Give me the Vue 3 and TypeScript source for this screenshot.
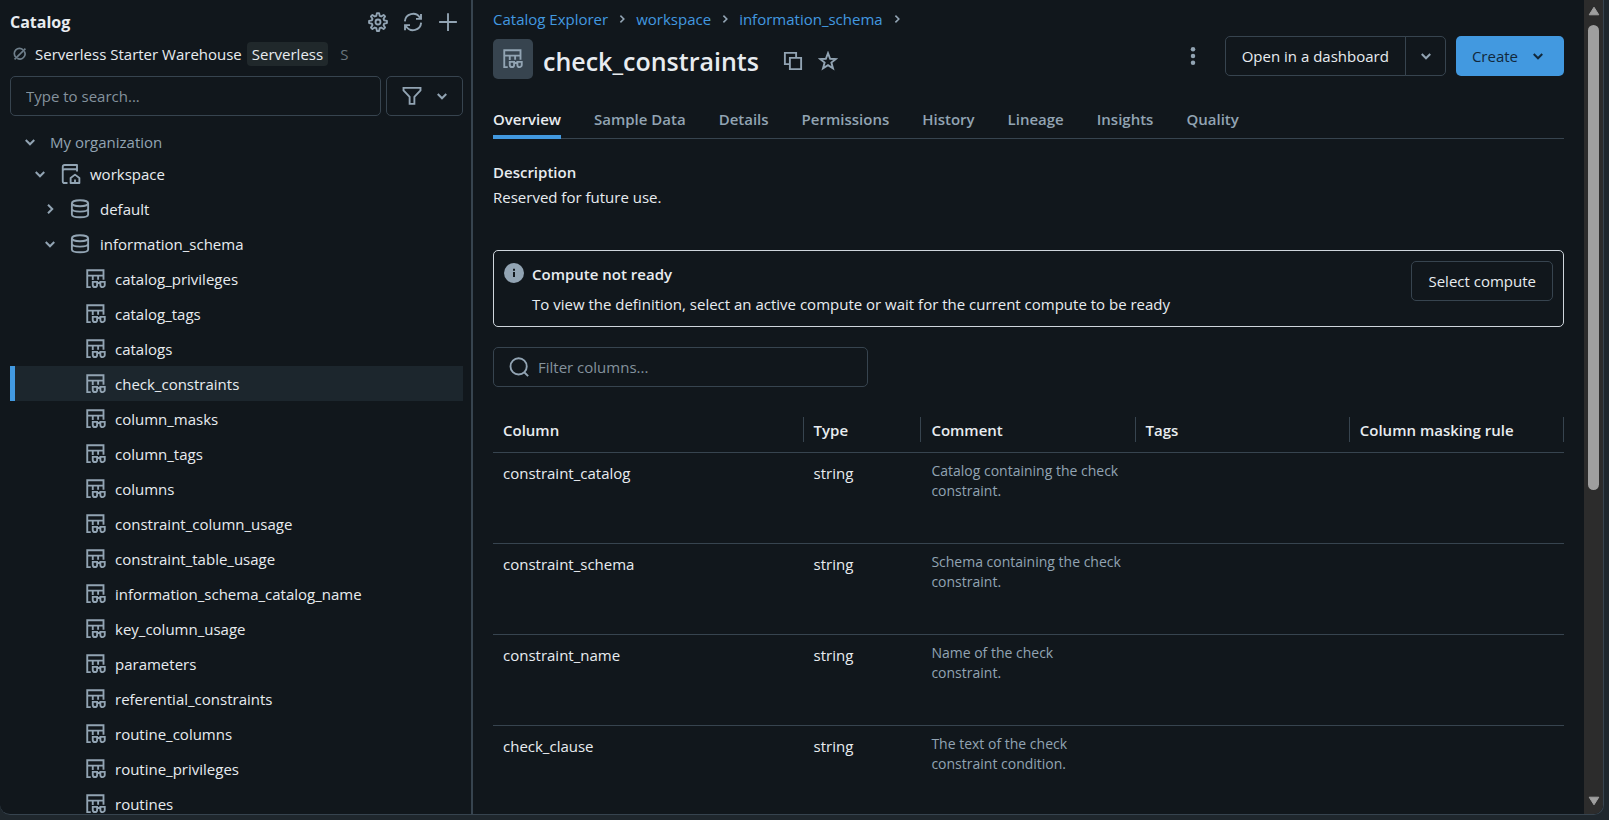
<script setup lang="ts">
import { ref } from 'vue'

interface TreeNode {
  name: string
  level: number
  icon?: string
  state?: 'open' | 'closed'
}

interface ColumnRow {
  name: string
  type: string
  comment: string
}

const views: string[] = [
  'catalog_privileges',
  'catalog_tags',
  'catalogs',
  'check_constraints',
  'column_masks',
  'column_tags',
  'columns',
  'constraint_column_usage',
  'constraint_table_usage',
  'information_schema_catalog_name',
  'key_column_usage',
  'parameters',
  'referential_constraints',
  'routine_columns',
  'routine_privileges',
  'routines',
]

const nodes: TreeNode[] = [
  { name: 'My organization', level: 0, state: 'open' },
  { name: 'workspace', level: 1, icon: 'catalog-home', state: 'open' },
  { name: 'default', level: 2, icon: 'database', state: 'closed' },
  { name: 'information_schema', level: 2, icon: 'database', state: 'open' },
  ...views.map((name): TreeNode => ({ name, level: 3, icon: 'view' })),
]

const crumbs: string[] = ['Catalog Explorer', 'workspace', 'information_schema']
const tabs: string[] = ['Overview', 'Sample Data', 'Details', 'Permissions', 'History', 'Lineage', 'Insights', 'Quality']
const headers: string[] = ['Column', 'Type', 'Comment', 'Tags', 'Column masking rule']

const rows: ColumnRow[] = [
  { name: 'constraint_catalog', type: 'string', comment: 'Catalog containing the check constraint.' },
  { name: 'constraint_schema', type: 'string', comment: 'Schema containing the check constraint.' },
  { name: 'constraint_name', type: 'string', comment: 'Name of the check constraint.' },
  { name: 'check_clause', type: 'string', comment: 'The text of the check constraint condition.' },
]

const selected = ref('check_constraints')
const activeTab = ref('Overview')
const search = ref('')
const columnFilter = ref('')

function gearOutline(teeth: number, outer: number, inner: number): string {
  const step = (Math.PI * 2) / teeth
  const points: string[] = []
  for (let i = 0; i < teeth; i++) {
    const mid = i * step - Math.PI / 2
    const corners: [number, number][] = [[-0.34, inner], [-0.15, outer], [0.15, outer], [0.34, inner]]
    for (const [offset, radius] of corners) {
      const angle = mid + offset * step
      points.push(`${(8 + radius * Math.cos(angle)).toFixed(2)} ${(8 + radius * Math.sin(angle)).toFixed(2)}`)
    }
  }
  return `M${points.join('L')}Z`
}

const gear = gearOutline(8, 7.2, 5.1)
</script>

<template>
  <div class="window">
    <svg class="sprite" aria-hidden="true">
      <symbol id="gear" viewBox="0 0 16 16">
        <g fill="none" stroke="currentColor" stroke-width="1.5" stroke-linejoin="round">
          <path :d="gear" />
          <circle cx="8" cy="8" r="2" />
        </g>
      </symbol>
      <symbol id="refresh" viewBox="0 0 16 16">
        <path fill="none" stroke="currentColor" stroke-width="1.5" d="M1.500 7.500A6.500 6.500 0 0 1 13.400 4.400L14.300 5.400M14.400 1.500V5.500H10.400M14.500 8.500A6.500 6.500 0 0 1 2.600 11.600L1.700 10.600M1.600 14.500V10.500H5.600" />
      </symbol>
      <symbol id="plus" viewBox="0 0 16 16">
        <path fill="none" stroke="currentColor" stroke-width="1.5" d="M8 .9V15.1M.9 8H15.1" />
      </symbol>
      <symbol id="funnel" viewBox="0 0 16 16">
        <path fill="none" stroke="currentColor" stroke-width="1.500" d="M1.200 1.500H14.800V3.500L9.900 8.700V14.300H6.100V8.700L1.200 3.500Z" />
      </symbol>
      <symbol id="chevron-down" viewBox="0 0 16 16">
        <path fill="none" stroke="currentColor" stroke-width="1.6" d="M4.600 6.400L8 9.800L11.400 6.400" />
      </symbol>
      <symbol id="chevron-right" viewBox="0 0 16 16">
        <path fill="none" stroke="currentColor" stroke-width="1.6" d="M6.400 4.600L9.800 8L6.400 11.400" />
      </symbol>
      <symbol id="stopped" viewBox="0 0 16 16">
        <g fill="none" stroke="currentColor" stroke-width="1.9">
          <path d="M11.500 3.200A5.800 5.800 0 0 0 3.200 11.500M12.800 4.800A5.800 5.800 0 0 1 4.800 12.800" />
          <path d="M1.800 14.200L14.200 1.800" />
        </g>
      </symbol>
      <symbol id="catalog-home" viewBox="0 0 16 16">
        <g fill="none" stroke="currentColor" stroke-width="1.500" stroke-linejoin="round">
          <path d="M5.200 15.200H2.900A1.500 1.500 0 0 1 1.400 13.700V2.200A1.500 1.500 0 0 1 2.900 .8H12.800V6M1.400 5.300A1.500 1.500 0 0 1 2.900 4.200H12.800" />
          <path d="M7.700 15.200V11.200L11.200 8.500L14.700 11.200V15.200Z" />
          <path d="M11.200 12.300V15.200" />
        </g>
      </symbol>
      <symbol id="database" viewBox="0 0 16 16">
        <g fill="none" stroke="currentColor" stroke-width="1.500">
          <ellipse cx="8" cy="3.400" rx="6.500" ry="2.400" />
          <path d="M1.500 3.400V12.300C1.500 13.700 4.400 14.600 8 14.600S14.500 13.700 14.500 12.300V3.400M1.500 7.800C1.500 9.200 4.400 10.100 8 10.100S14.500 9.200 14.500 7.800" />
        </g>
      </symbol>
      <symbol id="view" viewBox="0 0 16 16">
        <g fill="none" stroke="currentColor" stroke-width="1.500">
          <path d="M3.800 14.500H1V1H14V8.500M1 5.300H14M5.400 5.300V8.800M9.700 5.300V8.500" />
          <path d="M5.400 10.300H8.900V12.700A1.750 1.750 0 0 1 5.400 12.700ZM11.500 10.300H15V12.700A1.750 1.750 0 0 1 11.500 12.700ZM8.900 11.200H11.500" />
        </g>
      </symbol>
      <symbol id="copy" viewBox="0 0 16 16">
        <path fill="none" stroke="currentColor" stroke-width="1.500" d="M5 10.500H1.500V1.500H10.500V5M5.500 5.500H14.500V14.500H5.500Z" />
      </symbol>
      <symbol id="star" viewBox="0 0 16 16">
        <path fill="none" stroke="currentColor" stroke-width="1.500" d="M8 1.700L9.700 6.200L14.400 6.400L10.700 9.300L12 13.900L8 11.300L4 13.900L5.300 9.300L1.600 6.400L6.300 6.200Z" />
      </symbol>
      <symbol id="kebab" viewBox="0 0 16 16">
        <g fill="currentColor">
          <circle cx="8" cy="2.600" r="1.800" />
          <circle cx="8" cy="8" r="1.800" />
          <circle cx="8" cy="13.400" r="1.800" />
        </g>
      </symbol>
      <symbol id="info" viewBox="0 0 16 16">
        <circle cx="8" cy="8" r="8" fill="currentColor" />
        <path fill="none" stroke="#11171c" stroke-width="1.600" d="M8 7.200V11.200M8 4.600V6.100" />
      </symbol>
      <symbol id="search" viewBox="0 0 16 16">
        <g fill="none" stroke="currentColor" stroke-width="1.500">
          <circle cx="7.700" cy="7.500" r="6.500" />
          <path d="M12.200 12.200L15.300 15.300" />
        </g>
      </symbol>
    </svg>

    <div class="panel">
      <aside class="sidebar">
        <header class="side-head">
          <h2>Catalog</h2>
          <div class="side-actions">
            <button type="button" class="plain" aria-label="Settings"><svg class="icon"><use href="#gear" /></svg></button>
            <button type="button" class="plain" aria-label="Refresh"><svg class="icon"><use href="#refresh" /></svg></button>
            <button type="button" class="plain" aria-label="Add"><svg class="icon"><use href="#plus" /></svg></button>
          </div>
        </header>

        <div class="warehouse">
          <svg class="icon-small"><use href="#stopped" /></svg>
          <span class="warehouse-name">Serverless Starter Warehouse</span>
          <span class="badge">Serverless</span>
          <span class="size">S</span>
        </div>

        <div class="side-search">
          <input v-model="search" class="field" type="text" placeholder="Type to search..." aria-label="Search catalog" />
          <button type="button" class="outlined filter" aria-label="Filter">
            <svg class="icon"><use href="#funnel" /></svg>
            <svg class="icon"><use href="#chevron-down" /></svg>
          </button>
        </div>

        <ul class="tree" role="tree">
          <li v-for="node in nodes" :key="node.name" role="none">
            <button
              type="button"
              role="treeitem"
              class="node"
              :class="['level-' + node.level, { selected: node.name === selected }]"
              :aria-selected="node.name === selected"
              @click="selected = node.name"
            >
              <svg v-if="node.state" class="icon"><use :href="node.state === 'open' ? '#chevron-down' : '#chevron-right'" /></svg>
              <svg v-if="node.icon" class="icon node-icon"><use :href="'#' + node.icon" /></svg>
              <span>{{ node.name }}</span>
            </button>
          </li>
        </ul>
      </aside>

      <main class="main">
        <nav class="crumbs" aria-label="Breadcrumb">
          <template v-for="crumb in crumbs" :key="crumb">
            <a href="#">{{ crumb }}</a>
            <svg class="icon-crumb"><use href="#chevron-right" /></svg>
          </template>
        </nav>

        <div class="title-row">
          <span class="title-icon"><svg class="icon"><use href="#view" /></svg></span>
          <div class="title">
            <h1>check_constraints</h1>
            <button type="button" class="plain copy" aria-label="Copy name"><svg class="icon"><use href="#copy" /></svg></button>
            <button type="button" class="plain" aria-label="Add to favorites"><svg class="icon"><use href="#star" /></svg></button>
          </div>
          <div class="title-actions">
            <button type="button" class="plain kebab" aria-label="More actions"><svg class="icon"><use href="#kebab" /></svg></button>
            <div class="split">
              <button type="button" class="outlined">Open in a dashboard</button>
              <button type="button" class="outlined caret" aria-label="More open options"><svg class="icon"><use href="#chevron-down" /></svg></button>
            </div>
            <button type="button" class="primary">Create <svg class="icon"><use href="#chevron-down" /></svg></button>
          </div>
        </div>

        <div class="tabs" role="tablist">
          <button
            v-for="tab in tabs"
            :key="tab"
            type="button"
            role="tab"
            class="tab"
            :class="{ active: tab === activeTab }"
            :aria-selected="tab === activeTab"
            @click="activeTab = tab"
          >{{ tab }}</button>
        </div>

        <section class="description">
          <h3>Description</h3>
          <p>Reserved for future use.</p>
        </section>

        <section class="alert" role="status">
          <svg class="icon"><use href="#info" /></svg>
          <div class="alert-text">
            <strong>Compute not ready</strong>
            <p>To view the definition, select an active compute or wait for the current compute to be ready</p>
          </div>
          <button type="button" class="outlined">Select compute</button>
        </section>

        <label class="field column-filter">
          <svg class="icon"><use href="#search" /></svg>
          <input v-model="columnFilter" type="text" placeholder="Filter columns..." aria-label="Filter columns" />
        </label>

        <table class="columns">
          <colgroup>
            <col class="col-name" />
            <col class="col-type" />
            <col class="col-wide" />
            <col class="col-wide" />
            <col class="col-wide" />
          </colgroup>
          <thead>
            <tr>
              <th v-for="header in headers" :key="header" scope="col"><span>{{ header }}</span></th>
            </tr>
          </thead>
          <tbody>
            <tr v-for="row in rows" :key="row.name">
              <td>{{ row.name }}</td>
              <td>{{ row.type }}</td>
              <td class="comment">{{ row.comment }}</td>
              <td></td>
              <td></td>
            </tr>
          </tbody>
        </table>
      </main>

      <div class="scrollbar" aria-hidden="true">
        <svg class="arrow" viewBox="0 0 12 10"><path d="M6 1.200L10.800 8.800H1.200Z" /></svg>
        <div class="track"><div class="thumb"></div></div>
        <svg class="arrow" viewBox="0 0 12 10"><path d="M6 8.800L10.800 1.200H1.200Z" /></svg>
      </div>
    </div>
  </div>
</template>

<style>
body {
  background: #1f272d;
}
</style>

<style scoped>
.window {
  --text: #e8ecf0;
  --muted: #92a4b3;
  --line: #37444f;
  --blue: #4299e0;
  box-sizing: border-box;
  height: 100vh;
  padding: 0 5px 5px 0;
  overflow: hidden;
  color: var(--text);
  font: 15px/20px "Open Sans", "Noto Sans", sans-serif;
}

.window *,
.window *::before {
  box-sizing: border-box;
}

.sprite {
  display: none;
}

.icon {
  display: block;
  flex: none;
  width: 20px;
  height: 20px;
}

.icon-small {
  flex: none;
  width: 14px;
  height: 14px;
  color: #6f7f8b;
}

h1,
h2,
h3,
p {
  margin: 0;
}

button,
input {
  font: inherit;
  color: inherit;
}

button {
  display: flex;
  align-items: center;
  margin: 0;
  padding: 0;
  border: 0;
  background: none;
  white-space: nowrap;
  cursor: pointer;
}

.plain {
  color: var(--muted);
}

.panel {
  display: flex;
  height: 100%;
  overflow: hidden;
  background: #11171c;
  border: solid var(--line);
  border-width: 0 1px 1px 0;
  border-radius: 0 0 10px 10px;
}

.sidebar {
  display: flex;
  flex: none;
  flex-direction: column;
  width: 473px;
  padding: 5px 8px 0 10px;
  border-right: 2px solid var(--line);
}

.side-head {
  display: flex;
  align-items: center;
  justify-content: space-between;
  height: 33px;
  padding-right: 5px;
}

.side-head h2 {
  font-size: 16px;
  font-weight: 700;
}

.side-actions {
  display: flex;
  gap: 15px;
}

.warehouse {
  display: flex;
  align-items: center;
  height: 32px;
  padding-left: 3px;
}

.warehouse-name {
  margin-left: 8px;
}

.badge {
  margin-left: 5px;
  padding: 2px 5px;
  border-radius: 4px;
  background: #20282b;
}

.size {
  margin-left: 12px;
  color: #69747c;
}

.side-search {
  display: flex;
  flex: none;
  gap: 5px;
  margin-top: 6px;
}

.field {
  flex: 1;
  min-width: 0;
  height: 40px;
  padding: 0 15px;
  border: 1px solid var(--line);
  border-radius: 5px;
  background: transparent;
  outline: none;
}

input::placeholder {
  color: #84929d;
  opacity: 1;
}

.outlined {
  height: 40px;
  padding: 0 16px;
  border: 1px solid var(--line);
  border-radius: 5px;
}

.filter {
  gap: 10px;
  padding: 0 10px 0 15px;
  color: var(--muted);
}

.tree {
  flex: 1;
  margin: 12px 0 0;
  padding: 0;
  overflow: hidden;
  list-style: none;
}

.node {
  width: 100%;
  height: 35px;
  border-left: 5px solid transparent;
}

.node .icon {
  color: var(--muted);
}

.node.selected {
  border-color: var(--blue);
  background: #1c262d;
}

.level-0 {
  height: 28px;
  padding-left: 5px;
  gap: 10px;
  color: var(--muted);
}

.level-1 {
  padding-left: 15px;
}

.level-1 .node-icon {
  margin: 0 9px 0 11px;
}

.level-2 {
  padding-left: 25px;
}

.level-2 .node-icon {
  margin: 0 10px;
}

.level-3 {
  padding-left: 71px;
  gap: 9px;
}

.main {
  flex: 1;
  min-width: 0;
  padding: 9px 20px 0;
  overflow: hidden;
}

.crumbs {
  display: flex;
  align-items: center;
}

.crumbs a {
  color: var(--blue);
  text-decoration: none;
}

.icon-crumb {
  width: 16px;
  height: 16px;
  margin: 0 6px;
  color: var(--muted);
}

.title-row {
  display: flex;
  align-items: center;
  height: 40px;
  margin-top: 10px;
}

.title-icon {
  display: grid;
  flex: none;
  place-items: center;
  width: 40px;
  height: 40px;
  margin-right: 10px;
  border-radius: 5px;
  background: var(--line);
  color: var(--muted);
}

.title {
  display: flex;
  align-items: center;
  padding-top: 4px;
}

h1 {
  font-size: 25px;
  font-weight: 600;
  line-height: 36px;
}

.copy {
  margin: 0 15px 0 24px;
}

.title-actions {
  display: flex;
  align-items: center;
  gap: 10px;
  align-self: flex-start;
  height: 34px;
  margin-left: auto;
}

.kebab {
  margin-right: 12px;
}

.split {
  display: flex;
}

.split .outlined:first-child {
  border-radius: 5px 0 0 5px;
}

.split .caret {
  width: 41px;
  padding: 0 10px;
  margin-left: -1px;
  border-radius: 0 5px 5px 0;
  color: var(--muted);
}

.primary {
  gap: 10px;
  height: 40px;
  padding: 0 16px;
  border-radius: 5px;
  background: var(--blue);
  color: #11283b;
}

.tabs {
  display: flex;
  gap: 33px;
  height: 40px;
  margin-top: 20px;
  border-bottom: 1px solid var(--line);
}

.tab {
  height: 40px;
  padding-top: 4px;
  border-bottom: 4px solid transparent;
  color: var(--muted);
  font-weight: 600;
}

.tab.active {
  border-color: var(--blue);
  color: var(--text);
}

.description {
  margin-top: 23px;
}

h3 {
  margin-bottom: 5px;
  font-size: 15px;
  font-weight: 600;
}

.alert {
  display: flex;
  align-items: flex-start;
  margin-top: 43px;
  padding: 10px;
  border: 1px solid #cfd6dc;
  border-radius: 5px;
}

.alert .icon {
  margin: 2px 8px 0 0;
  color: var(--muted);
}

.alert-text {
  display: grid;
  flex: 1;
  gap: 10px;
  padding: 3px 0 2px;
}

.alert-text strong {
  font-weight: 600;
}

.column-filter {
  display: flex;
  align-items: center;
  gap: 9px;
  width: 35%;
  margin-top: 20px;
  color: var(--muted);
}

.column-filter input {
  flex: 1;
  min-width: 0;
  padding: 0;
  border: 0;
  background: none;
  outline: none;
}

.columns {
  width: 100%;
  margin-top: 20px;
  border-collapse: collapse;
  table-layout: fixed;
}

.col-name {
  width: 29%;
}

.col-type {
  width: 11%;
}

.col-wide {
  width: 20%;
}

th {
  padding: 10px 0;
  font-weight: 600;
  text-align: left;
}

th span {
  display: block;
  padding: 3px 10px 2px;
  border-right: 1px solid var(--line);
}

tr {
  border-bottom: 1px solid var(--line);
}

td {
  height: 91px;
  padding: 10px;
  vertical-align: top;
}

.comment {
  padding-top: 8px;
  color: var(--muted);
  font-size: 14px;
}

.scrollbar {
  display: flex;
  flex: none;
  flex-direction: column;
  align-items: center;
  width: 19px;
  padding: 6px 0 8px;
  background: #2c2c2c;
}

.arrow {
  width: 12px;
  height: 10px;
  fill: #9f9f9f;
  stroke: #9f9f9f;
  stroke-width: 1;
  stroke-linejoin: round;
}

.track {
  flex: 1;
  margin: 9px 0;
}

.thumb {
  width: 11px;
  height: 61%;
  border-radius: 6px;
  background: #9f9f9f;
}
</style>
